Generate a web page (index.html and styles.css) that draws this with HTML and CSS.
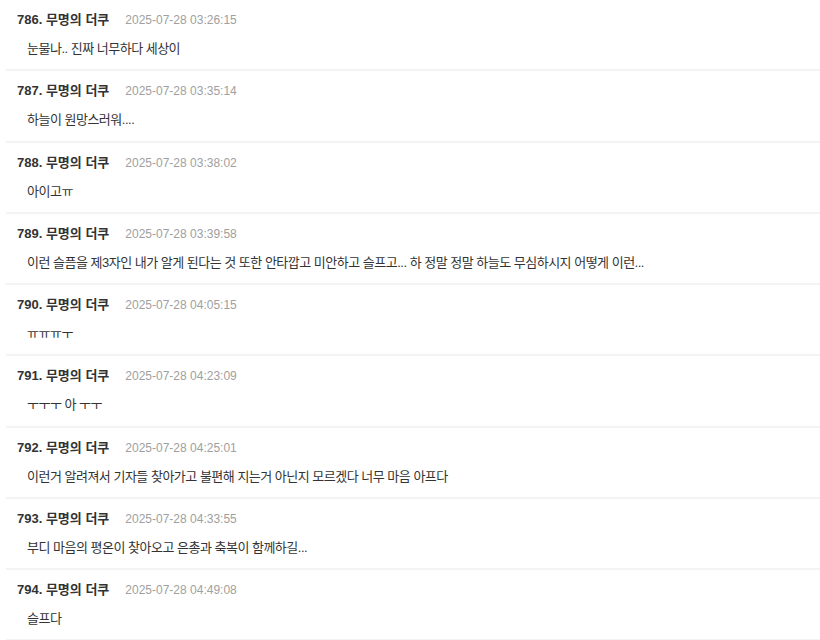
FILE: index.html
```html
<!DOCTYPE html>
<html lang="ko">
<head>
<meta charset="utf-8">
<link rel="stylesheet" href="styles.css">
</head>
<body>
<ul class="comments">
  <li class="comment"><div class="head"><span class="name">786. 무명의 더쿠</span><span class="date">2025-07-28 03:26:15</span></div><div class="body">눈물나.. 진짜 너무하다 세상이</div></li>
  <li class="comment"><div class="head"><span class="name">787. 무명의 더쿠</span><span class="date">2025-07-28 03:35:14</span></div><div class="body">하늘이 원망스러워....</div></li>
  <li class="comment"><div class="head"><span class="name">788. 무명의 더쿠</span><span class="date">2025-07-28 03:38:02</span></div><div class="body">아이고ㅠ</div></li>
  <li class="comment"><div class="head"><span class="name">789. 무명의 더쿠</span><span class="date">2025-07-28 03:39:58</span></div><div class="body">이런 슬픔을 제3자인 내가 알게 된다는 것 또한 안타깝고 미안하고 슬프고... 하 정말 정말 하늘도 무심하시지 어떻게 이런...</div></li>
  <li class="comment"><div class="head"><span class="name">790. 무명의 더쿠</span><span class="date">2025-07-28 04:05:15</span></div><div class="body">ㅠㅠㅠㅜ</div></li>
  <li class="comment"><div class="head"><span class="name">791. 무명의 더쿠</span><span class="date">2025-07-28 04:23:09</span></div><div class="body">ㅜㅜㅜ 아 ㅜㅜ</div></li>
  <li class="comment"><div class="head"><span class="name">792. 무명의 더쿠</span><span class="date">2025-07-28 04:25:01</span></div><div class="body">이런거 알려져서 기자들 찾아가고 불편해 지는거 아닌지 모르겠다 너무 마음 아프다</div></li>
  <li class="comment"><div class="head"><span class="name">793. 무명의 더쿠</span><span class="date">2025-07-28 04:33:55</span></div><div class="body">부디 마음의 평온이 찾아오고 은총과 축복이 함께하길...</div></li>
  <li class="comment"><div class="head"><span class="name">794. 무명의 더쿠</span><span class="date">2025-07-28 04:49:08</span></div><div class="body">슬프다</div></li>
</ul>
</body>
</html>
```
FILE: styles.css
```css
html, body {
  margin: 0;
  padding: 0;
  background: #ffffff;
}
body {
  font-family: "Liberation Sans", "Noto Sans CJK KR", sans-serif;
  color: #333333;
}
.comments {
  list-style: none;
  margin: 0 0 0 6px;
  padding: 0;
}
.comment {
  height: 71.25px;
  box-sizing: border-box;
  padding: 10px 0 0 11px;
  border-bottom: 2px solid #f3f3f3;
}
.head {
  display: flex;
  align-items: baseline;
  gap: 16px;
  line-height: 20px;
  height: 20px;
}
.name {
  font-size: 13px;
  font-weight: bold;
  color: #333333;
}
.date {
  font-size: 12px;
  color: #a0a0a0;
}
.body {
  margin-top: 9px;
  padding-left: 10px;
  font-size: 13px;
  letter-spacing: -0.5px;
  line-height: 20px;
  color: #333333;
}
```
